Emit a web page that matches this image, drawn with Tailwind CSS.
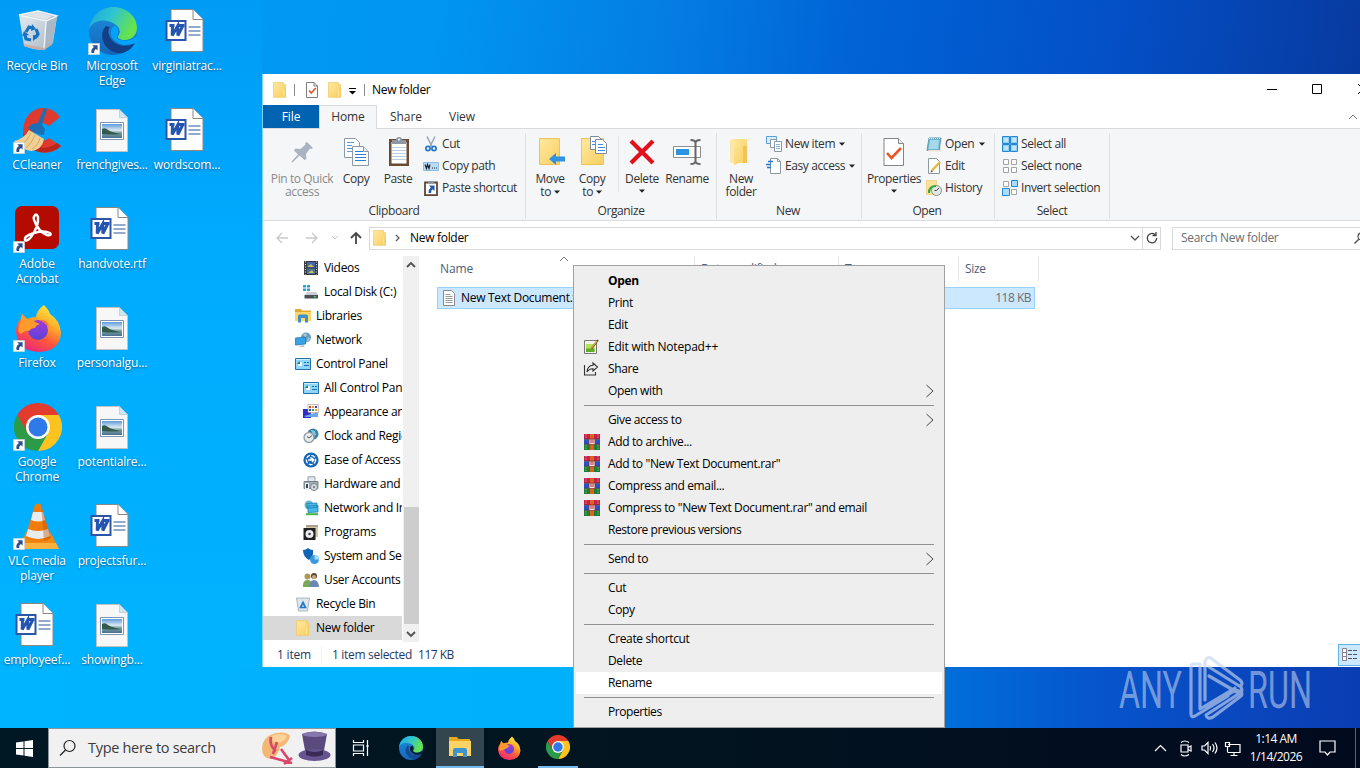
<!DOCTYPE html>
<html lang="en">
  <head>
    <meta charset="UTF-8" />
    <meta name="viewport" content="width=device-width, initial-scale=1.0" />
    <title>New folder</title>

    <script src="https://cdn.jsdelivr.net/npm/@tailwindcss/browser@4"></script>
  </head>
  <body class="w-[1360px] h-[768px] overflow-hidden relative flex flex-col text-xs text-black font-['Open_Sans',sans-serif]">
    <!-- Icon symbols -->
    <svg class="absolute size-0">
      <defs>
        <linearGradient id="g-edge1" x1="0" y1="0" x2="1" y2="0.4"><stop offset="0" stop-color="#1ba5dc" /><stop offset="0.5" stop-color="#2fc5d0" /><stop offset="1" stop-color="#66e34d" /></linearGradient>
        <linearGradient id="g-edge2" x1="0" y1="0" x2="0" y2="1"><stop offset="0" stop-color="#1b8fdf" /><stop offset="1" stop-color="#1566b8" /></linearGradient>
        <linearGradient id="g-ff" x1="0.8" y1="0" x2="0.3" y2="1"><stop offset="0" stop-color="#fff044" /><stop offset="0.35" stop-color="#ffb02a" /><stop offset="0.65" stop-color="#ff5a3a" /><stop offset="1" stop-color="#e8257c" /></linearGradient>
        <linearGradient id="g-ff2" x1="0" y1="0" x2="0" y2="1"><stop offset="0" stop-color="#a33bd6" /><stop offset="1" stop-color="#5a43d8" /></linearGradient>
        <linearGradient id="g-fold" x1="0" y1="0" x2="1" y2="1"><stop offset="0" stop-color="#ffe9a0" /><stop offset="1" stop-color="#f8cf60" /></linearGradient>
        <linearGradient id="g-pic" x1="0" y1="0" x2="0" y2="1"><stop offset="0" stop-color="#5f9bdc" /><stop offset="0.45" stop-color="#dbe9f2" /><stop offset="0.6" stop-color="#86a9ad" /><stop offset="1" stop-color="#476f8f" /></linearGradient>
        <linearGradient id="g-bin" x1="0" y1="0" x2="1" y2="1"><stop offset="0" stop-color="#e4ebf1" /><stop offset="1" stop-color="#a9b8c5" /></linearGradient>
      </defs>
      <symbol id="shortcut" viewBox="0 0 12 12"><path fill="#fff" stroke="#b9c4cf" stroke-width=".6" d="M.3.3h11.4v11.4H.3z" /><path fill="#2b4f8e" d="M4.200 2.200h5.400v5.400L7.900 6Q5.600 7.200 6.200 10H3.600Q2.400 6.400 6 3.900z" /></symbol>
      <symbol id="bin" viewBox="2 0 48 48">
        <path fill="url(#g-bin)" d="M7 8l5 31q10 4 20 4l9-7 4-26-18-4z" /><path fill="#a9b8c4" d="M34 15l11-5-5 27-8 6z" /><path fill="#b5c1cb" d="M7 8l19-4 19 5-11 6z" /><path fill="#dde5ea" d="M12 8l14-3 14 4-6 4z" /><path fill="none" stroke="#f4f7f9" stroke-width="1.300" d="M7 8l27 6 11-5L26 4zM34 15l-2 27" /><path fill="#c9a890" opacity=".7" d="M12 37l20 4 8-5v2l-8 5q-10 0-20-4z" />
        <path fill="none" stroke="#1672c4" stroke-width="3.200" d="M14 25l3-5 4 1M24 22l2 5-3 4M19 33l-5-1-1-4" /><path fill="#1672c4" d="M20 17l4 5-5 2zM27 29l-6 5v-6zM10 29l2-5 5 4z" />
      </symbol>
      <symbol id="edge" viewBox="0 0 48 48">
        <circle cx="24" cy="24" r="24" fill="url(#g-edge2)" /><path fill="url(#g-edge1)" d="M0 22C2 9 12 0 24 0c14 0 24 10 24 21 0 8-6 12-12 12-5 0-8-2-7-4 3-3 2-8-2-11C19 12 6 11 0 22z" /><path fill="#123f86" d="M17 19c-8 8-3 25 12 27 6 1 13-3 17-10-10 6-23 2-26-8-1-3-1-6 1-8z" /><path fill="#00a4fb" d="M27 19q4 5 1 10-1 3 4 4 8 2 14-3l2-1v4l-2 3q-12 5-20-2-5-4-4-10 1-5 5-5zM48 33l-2 5-3 3 6 4V30z" />
      </symbol>
      <symbol id="edge-sm" viewBox="0 0 24 24">
        <circle cx="12" cy="12" r="12" fill="url(#g-edge2)" /><path fill="url(#g-edge1)" d="M0 11C1 4.500 6 0 12 0c7 0 12 5 12 10.500 0 4-3 6-6 6-2.500 0-4-1-3.500-2 1.500-1.500 1-4-1-5.500C9.500 6 3 5.500 0 11z" /><path fill="#154a94" d="M8.500 9.500c-4 4-1.500 12.500 6 13.500 3 .5 6.500-1.500 8.500-5-5 3-11.500 1-13-4-.5-1.500-.5-3 .5-4z" /><path fill="#04222e" d="M13.500 9.500q2 2.500.5 5-.5 1.500 2 2 4 1 7-1.500l1-.5v2l-1 1.500q-6 2.500-10-1-2.500-2-2-5 .5-2.500 2.500-2.500z" />
      </symbol>
      <symbol id="ccleaner" viewBox="0 0 48 48">
        <path fill="#e0392d" d="M46 11l-11 9q-8-6-14 0-4 7 1 13 6 5 13-1l12 8q-9 9-22 6Q9 41 9 24 11 5 27 2q12-1 19 9z" /><path fill="#b8261d" d="M9 27q2 15 16 19 13 2 22-6l-4-3Q24 50 9 27z" /><path fill="#f0cf93" d="M15 24l15 9q-2 11-13 12Q6 43 0 35q10-2 15-11z" /><path stroke="#d2a766" d="M17 27Q13 36 7 39M21 29q-3 8-9 13M26 32q-2 8-8 11" fill="none" /><path fill="#1c6fb4" d="M14 22l4-4 6-1 6-15 3 1-5 16 3 4-1 6q-9 0-16-7z" />
      </symbol>
      <symbol id="acrobat" viewBox="1 1 48 48"><rect x="2" y="2" width="44" height="43" rx="7" fill="#b30b00" /><path fill="none" stroke="#fff" stroke-width="2.500" stroke-linejoin="round" d="M21 13q2-5 4 0 1 9-7 20-4 5-6 3-1-4 9-7 10-3 16 0 2 3-3 2-9-4-12-13-2-4-1-5z" /></symbol>
      <symbol id="firefox" viewBox="0 0 48 48">
        <path fill="url(#g-ff)" d="M30 1q5 5 6 9 10 6 11 19-1 18-22 19Q4 47 2 28q0-9 5-13l1-5 5 5q4-2 9-2 1-7 8-12z" /><circle cx="24" cy="26" r="10" fill="url(#g-ff2)" /><path fill="#ff9a2b" d="M7 15l1-5 5 5q5-1 8 3l5 2q-4 1-5 4-4 0-6 3-4-1-8 3-4-2-2-8 0-3 2-4z" /><path fill="#fe7133" d="M26 16q8-1 9 8l-3-4z" />
      </symbol>
      <symbol id="chrome" viewBox="0 0 48 48"><path fill="#e33b2e" d="M3.200 12A24 24 0 0 1 44.800 12H24L13 30z" /><path fill="#fcc31e" d="M44.800 12A24 24 0 0 1 24 48L34 30 36 22 24 12z" /><path fill="#2b9b48" d="M3.200 12L13.600 30 24 36l10-6L24 48A24 24 0 0 1 3.200 12z" /><circle cx="24" cy="24" r="12" fill="#fff" /><circle cx="24" cy="24" r="9.500" fill="#2f79e8" /></symbol>
      <symbol id="vlc" viewBox="0 0 48 48"><path fill="#f08a12" d="M10 35l2-5h24l3 5 6 12H4l5-12z" /><path fill="#fbb040" d="M7 41L4 47h41l-3-6z" /><path fill="#f27c0b" d="M21 3q3-3 6 0l10 33q-13 8-26 0z" /><path fill="#e9ecef" d="M19 10h10l2 8q-7 3-14 0zM14 27q10 4 20 0l2 7q-12 6-24 0z" /><path fill="#b75308" opacity=".4" d="M27 3l10 33q-3 3-7 3z" /></symbol>
      <symbol id="word" viewBox="2.500 0 48 48"><path fill="#fff" stroke="#8b8583" d="M9.500 2.500h22l10 10v32h-32z" /><path fill="#fff" stroke="#8b8583" d="M31.500 2.500v10h10" /><path fill="none" stroke="#2a5699" stroke-width="1.200" d="M27 20h12M27 24h12M27 28h12" /><path fill="#fff" stroke="#2a55a8" stroke-width="2" d="M5 14h19v19H5z" /><path fill="none" stroke="#2355b0" stroke-width="3" d="M8 18.500h5M16 18.500h7M11 18.500l-.3 10L16.200 19l.2 9.500 5-10" /></symbol>
      <symbol id="image" viewBox="1 0 48 48"><path fill="#f7f7f7" stroke="#c4c1be" d="M8.500 3.500h23l8 8v34h-31z" /><path fill="#cfe6f5" stroke="#b9c6cf" stroke-width=".7" d="M31.500 3.500v8h8z" /><path fill="#fff" stroke="#7a96b4" d="M12.500 16.500h23v17h-23z" /><path fill="url(#g-pic)" d="M14 18h20v14H14z" /><path fill="#33594a" d="M14 23q3-2 6 1 5 3 14 4-10 1-20 0z" /></symbol>

      <symbol id="folder" viewBox="0 0 16 16"><path fill="url(#g-fold)" stroke="#efc665" stroke-width=".7" d="M1.500.6h10v2h2v12.700H1.500z" /><path fill="#f6cd61" d="M11 6h3v9.500h-3z" /><path fill="#ffebab" d="M11.300 6.500h1v8h-1z" /></symbol>
      <symbol id="check-doc" viewBox="0 0 14 16"><path fill="#fff" stroke="#7d7d7d" d="M1.500.5H9L12.500 4v11.500h-11z" /><path fill="none" stroke="#7d7d7d" d="M9 .5V4h3.500" /><path fill="none" stroke="#e8562a" stroke-width="1.700" d="M4 8.500l2.300 2.500 4.500-5" /></symbol>
      <symbol id="props" viewBox="0 0 22 30"><path fill="#fff" stroke="#858585" d="M1 1.500h14.500l5 5v22H1z" /><path fill="#eee" stroke="#858585" d="M15.500 1.500v5h5" /><path fill="none" stroke="#e8562a" stroke-width="2.600" d="M4 16l4.500 5L18 11" /></symbol>
      <symbol id="pin" viewBox="0 0 32 32"><path fill="#a9b3c1" d="M21 6l6 6-2 1-1-.5-4 5.500.5 5-2 1-5-4.500L7 26l-1.500.5L6 25l6-6.500-4-4 1.500-2 5 .5 5-4.500-.5-1.500z" /></symbol>
      <symbol id="copy" viewBox="-1 0 32 32"><g fill="#fff" stroke="#8d98a8"><path d="M3.500 2.500h11l4 4v15h-15z" /><path d="M11.500 10.500h11l5 5v14h-16z" /></g><path stroke="#5aa0e0" d="M6 6.500h7M6 9.500h5M6 12.500h5M6 15.500h5" /><path stroke="#2c7fd0" d="M14 15.500h8M14 18.500h11M14 21.500h11M14 24.500h11" /><path fill="#e4e9ee" stroke="#8d98a8" d="M22.500 10.500v5h5" /></symbol>
      <symbol id="paste" viewBox="-1 -1 32 32"><path fill="#6b4a34" d="M6 2h20v27H6z" /><path fill="#fff" d="M8.500 5h15v21.500h-15z" /><path stroke="#b9cfe4" d="M9 10.500h14M9 13.500h14M9 16.500h14M9 19.500h14M9 22.500h14" /><path fill="#8c98a6" d="M9 3h4q0-3 3-3t3 3h4v4H9z" /><circle cx="16" cy="2.500" r="1" fill="#fff" /></symbol>
      <symbol id="cut" viewBox="0 0 16 16"><path fill="none" stroke="#9aa5b0" stroke-width="1.500" d="M4 .5l5 10M12 .5l-5 10" /><g fill="none" stroke="#2478c8" stroke-width="1.700"><circle cx="5" cy="12.500" r="2.100" /><circle cx="11" cy="12.500" r="2.100" /></g></symbol>
      <symbol id="copypath" viewBox="0 0 16 16"><path fill="#b9dcf8" stroke="#8dbce6" d="M.5 4.500h15v8H.5z" /><path fill="none" stroke="#223" stroke-width="1.200" d="M2 6.500l1.500 4 1-4 1.500 4 1-4M9 10h1M11 10h1M13 10h1" /></symbol>
      <symbol id="pasteshort" viewBox="0 0 16 16"><path fill="#fff" stroke="#5f4634" stroke-width="1.800" d="M2 2.500h12v12.600H2z" /><path fill="#8794a3" d="M5 1h6v2.500H5z" /><path fill="#1e5aa8" d="M6 5.500h5.500V11L9.700 9.300Q8 10 8 13H5.500q-.4-3.400 2.300-5.600z" /></symbol>
      <symbol id="moveto" viewBox="0 0 32 32"><path fill="url(#g-fold)" stroke="#ecc35d" d="M5.500 2.500h20v26h-20z" /><path fill="#2f92e2" d="M15 23l7-6v3.500h9v5h-9V29z" /></symbol>
      <symbol id="copyto" viewBox="0 0 32 32"><path fill="url(#g-fold)" stroke="#ecc35d" d="M5.500 2.500h22v26h-22z" /><g fill="#fff" stroke="#7f8b9a"><path d="M14.500.5h8l3 3v10h-11z" /><path d="M19.500 3.500h7l4 4v10h-11z" /></g><path stroke="#3f8fdc" d="M16 5.500h3M16 8.500h3M22 8.500h5M22 11.500h7M22 14.500h7" /></symbol>
      <symbol id="delete" viewBox="0 0 32 32"><path stroke="#e0101c" stroke-width="4.200" d="M5 5l22 22M27 5L5 27" /></symbol>
      <symbol id="rename" viewBox="0 0 32 32"><path fill="#fff" stroke="#8d8d8d" d="M2.500 10.500h27v11h-27z" /><path fill="#2f92e2" d="M5 13h13v6H5z" /><path fill="none" stroke="#666" stroke-width="2" d="M19.500 4q5 0 5 3 0-3 5-3M24.500 6v20M19.500 28q5 0 5-3 0 3 5 3" /></symbol>
      <symbol id="newfolder" viewBox="1 0 32 32"><path fill="#fbe7ad" d="M6 4l4 1v23l-4-2z" /><path fill="url(#g-fold)" d="M7 3h16v24h-8l-5 2V8z" /><path fill="#f2c452" d="M19 10h4v17h-4z" /><path fill="#fdf2d3" d="M23 20l2 7h-2z" /></symbol>
      <symbol id="newitem" viewBox="0 0 16 16"><path fill="#d8ecfb" stroke="#5da0dc" d="M.5.5h10v7H.5z" /><g fill="#fff" stroke="#8b97a5"><path d="M4.500 3.500h6v8h-6z" /><path d="M8.500 5.500h7v10h-7z" /></g><path stroke="#8bb4dc" d="M10 8.500h4M10 10.500h4M10 12.500h4" /></symbol>
      <symbol id="easy" viewBox="0 0 16 16"><path fill="#fff" stroke="#8b97a5" d="M4.500.5h7l3 3v12h-10z" /><path fill="none" stroke="#8b97a5" d="M11.500.5v3h3" /><path stroke="#2478c8" stroke-width="1.400" d="M2 3.500h5M0 6.500h5M1 9.500h4" /></symbol>
      <symbol id="notepad" viewBox="0 0 16 16"><path fill="#6fb5cf" stroke="#5d9ab4" d="M3 2h12l-1.500 12.500H1z" /><path fill="#a5d8ea" d="M4 4h9l-1 9H2.500z" /><path stroke="#f3fbff" stroke-dasharray="1 1" d="M3 2.500h12" /><path fill="#e9e3d6" d="M2 14h12l1-9v10.500H3z" /></symbol>
      <symbol id="edit" viewBox="0 0 16 16"><path fill="#fff" stroke="#8b97a5" d="M2.500.5h8l3 3v12h-11z" /><path stroke="#e7b73b" stroke-width="2.400" d="M6 12.500l8-8.500" /><path fill="#555" d="M4.500 14.500l.7-2.500 1.800 1.700z" /></symbol>
      <symbol id="history" viewBox="0 0 16 16"><path fill="#fce39b" stroke="#edc766" stroke-width=".6" d="M.5.5h10v14H.5z" /><circle cx="10.500" cy="10.500" r="5" fill="#e2e6e4" stroke="#89938f" /><path fill="none" stroke="#3aa63c" stroke-width="2.200" d="M3 13q0-7 7-7" /><path stroke="#444" fill="none" d="M10.500 10.500l2.500-2.500M10.500 10.500h-2" /></symbol>
      <symbol id="selall" viewBox="0 0 16 16"><path fill="#8fd0fb" stroke="#2586d2" d="M.5.5h7v7h-7zM8.500.5h7v7h-7zM.5 8.500h7v7h-7zM8.500 8.500h7v7h-7z" /><path fill="#bfe6ff" d="M2 2h4v4H2zM10 2h4v4h-4zM2 10h4v4H2zM10 10h4v4h-4z" /></symbol>
      <symbol id="selnone" viewBox="0 0 16 16"><path fill="#fff" stroke="#a3a3a3" d="M1.500 1.500h5v5h-5zM9.500 1.500h5v5h-5zM1.500 9.500h5v5h-5zM9.500 9.500h5v5h-5z" /></symbol>
      <symbol id="selinv" viewBox="0 0 16 16"><path fill="#fff" stroke="#a3a3a3" d="M1.500 1.500h5v5h-5zM9.500 9.500h5v5h-5z" /><path fill="#aadcff" stroke="#2586d2" d="M9.500.5h6v6h-6zM.5 8.500h7v7h-7z" /></symbol>

      <symbol id="videos" viewBox="0 0 16 16"><path fill="#35383f" d="M1 1h14v14H1z" /><path fill="#4665b5" d="M4 2h8v5.500H4z" /><path fill="#48709a" d="M4 8.500h8V14H4z" /><path fill="#c4bf4e" d="M5 6l3-2 3 3H5zM5 13l4-3 2 3z" /><path stroke="#d5d9de" stroke-width="1.200" stroke-dasharray="1 1.500" d="M2.500 1.500v13M13.500 1.500v13" /></symbol>
      <symbol id="disk" viewBox="0 0 16 16"><path fill="#26a4dd" d="M0 1h3v2.500H0zM4 1h3v2.500H4zM0 4.500h3V7H0zM4 4.500h3V7H4z" /><path fill="#c9ced2" d="M4 8h9l2 3H2z" /><path fill="#4a5257" d="M1.500 11h13.500v3.500H1.500z" /><path stroke="#6fe36f" d="M11 12.800h2" /></symbol>
      <symbol id="library" viewBox="0 0 16 16"><path fill="#e5a92c" d="M0 1h6l1 1.500h9V6H0z" /><path fill="#fcd667" d="M0 4h16v9H0z" /><path fill="#3d92cc" d="M3 8q0-1.500 1.500-1.500h7Q13 6.500 13 8v6.500h-3V10H6v4.500H3z" /></symbol>
      <symbol id="network" viewBox="0 0 16 16"><circle cx="11" cy="5.500" r="5" fill="#6d9cba" /><path fill="#a7cbdd" d="M8 2q3-1 4 1l-2 3zM13 5l2 2-3 3z" /><path fill="#35a3e6" stroke="#2278b6" stroke-width=".8" d="M.5 6l10-1v7L.5 13z" /><path fill="#6d8593" d="M3 14.500l5-1 2 1z" /></symbol>
      <symbol id="cpanel" viewBox="0 0 16 16"><path fill="#8ed6fb" stroke="#2271a8" d="M.5 2.500h15v11H.5z" /><path stroke="#c9efff" d="M1 3.500h14" /><circle cx="5" cy="8" r="2.200" fill="#fff" /><path fill="#288a4f" d="M5 8V5.500A2.500 2.500 0 0 0 2.500 8z" /><path stroke="#2170ad" stroke-width="1.200" d="M9 6.500h2M12 6.500h2M9 9.500h5" /></symbol>
      <symbol id="appear" viewBox="0 0 16 16"><path fill="#2c2fc7" d="M0 5h8v9H0z" /><path fill="#6aa7ef" d="M1 12l14-4v5H3z" /><path fill="#fff" stroke="#a58a8a" stroke-width=".6" d="M5 .5h10.500v8H5z" /><path fill="#d34c2c" d="M6 2h2v2H6z" /><path fill="#e3a023" d="M9 2h2v2H9zM12 5h2v2h-2z" /><path fill="#3b3bbd" d="M12 2h2v2h-2zM6 5h2v2H6z" /><path fill="#3d9c45" d="M9 5h2v2H9z" /></symbol>
      <symbol id="clock" viewBox="0 0 16 16"><circle cx="10" cy="6" r="5.500" fill="#3a84b0" /><path fill="#8ac3d4" d="M8 2l4 1 1 4-3 1z" /><circle cx="6" cy="9.500" r="5" fill="#e6eaec" stroke="#8b969c" stroke-width="1.200" /><path fill="none" stroke="#555" d="M6 10l3-2.500M6 10L4 8.500" /></symbol>
      <symbol id="ease" viewBox="0 0 16 16"><circle cx="8" cy="8" r="7.600" fill="#1566b6" /><circle cx="8" cy="8" r="4.700" fill="none" stroke="#fff" stroke-width="1.300" stroke-dasharray="4 1.500" /><path fill="none" stroke="#fff" stroke-width="1.300" d="M5 8h6M8 5v3M9 6l2 2-2 2" /></symbol>
      <symbol id="printer" viewBox="0 0 16 16"><path fill="#e5e9ec" stroke="#7e8b94" stroke-width=".8" d="M5 .8h7V6H5z" /><path fill="#9ea9b1" stroke="#66727a" stroke-width=".8" d="M1 5.500h14v7H1z" /><path fill="#e9edf0" d="M2 7h4v7H2z" /><path fill="#3e474d" d="M3 8h2v4H3z" /><circle cx="11" cy="11" r="3.500" fill="#d4dbe0" stroke="#7c878e" /><circle cx="11" cy="11" r="1" fill="#667" /></symbol>
      <symbol id="netint" viewBox="0 0 16 16"><circle cx="6" cy="5" r="4.500" fill="#66b5d3" /><path fill="#47b8e8" stroke="#1b7fae" stroke-width=".8" d="M4 3.500l10-.5v4.500l-10 .5zM5 6l10-.5V12L5 12.500z" /><path stroke="#44b548" stroke-width="2" d="M3 14.200h12" /></symbol>
      <symbol id="programs" viewBox="0 0 16 16"><path fill="#d7c9a4" d="M3 1h12v12H3z" /><path fill="#a9a391" d="M3 1h12v2H3z" /><path fill="#1f2124" d="M.5 4h12v12H.5z" /><circle cx="6.500" cy="10" r="4" fill="#eceef0" /><circle cx="6.500" cy="10" r="1.300" fill="#444" /></symbol>
      <symbol id="shield" viewBox="0 0 16 16"><path fill="#1063b5" d="M0 2q3 0 5-2 2 2 5 2 1 7-4 10Q0 9 0 2z" /><circle cx="11.500" cy="11.500" r="4.500" fill="#3a9ade" /><path fill="#a8dbfa" d="M11.500 11.500V7a4.500 4.500 0 0 1 4.500 4.500z" /></symbol>
      <symbol id="users" viewBox="0 0 16 16"><circle cx="4.500" cy="4.500" r="3" fill="#ad9a55" /><path fill="#7ba653" d="M0 15q-.5-7 4.500-7T9 15z" /><circle cx="11" cy="4" r="3" fill="#5b4634" /><circle cx="11" cy="5" r="2" fill="#d9a884" /><path fill="#6b87b5" d="M6.500 15q0-7 4.500-7t5 7z" /></symbol>
      <symbol id="bin-sm" viewBox="0 0 16 16"><path fill="#dfe5ea" stroke="#9aa7b2" stroke-width=".8" d="M1.500 2h13l-2 13h-9z" /><path fill="none" stroke="#2579c8" stroke-width="1.700" d="M5.500 11.500l2.500-5 2.500 5z" /></symbol>
      <symbol id="textfile" viewBox="0 0 14 16"><path fill="#fff" stroke="#8a8a8a" d="M1.500.5h8l3 3v12h-11z" /><path stroke="#999" d="M3.500 4.500h5M3.500 6.500h7M3.500 8.500h7M3.500 10.500h7M3.500 12.500h7" /></symbol>

      <symbol id="npp" viewBox="0 0 16 16"><path fill="#f3f3ee" stroke="#777" d="M1.500 1.500h12v13h-12z" /><path fill="#b6e05c" d="M3 5h8.500v8H3z" /><path fill="#62ad25" d="M3 9.500h8.500V13H3z" /><path stroke="#5a4a2a" stroke-width="2" d="M8.500 9.500L15 1" /><path stroke="#eab83c" stroke-width="1.200" d="M8.500 9L14 2" /></symbol>
      <symbol id="share" viewBox="0 0 16 16"><path fill="none" stroke="#333" stroke-width="1.100" d="M1.500 4v10h11v-3M10 2l4.500 4L10 10V7.700Q6 7.500 4 11q.5-6.500 6-6.700z" /></symbol>
      <symbol id="rar" viewBox="0 0 16 16"><path fill="#c8204e" d="M0 0h16v5H0z" /><path fill="#2c51c4" d="M0 5.500h16V10H0z" /><path fill="#17803a" d="M0 10.500h16V16H0z" /><path stroke="#191c2a" stroke-width=".7" d="M0 5.200h16M0 10.300h16" /><path fill="#d9641e" d="M6 0h4v16H6z" /><path stroke="#e0a050" stroke-width=".8" stroke-dasharray="1.500 1" d="M2 0v5M14 0v5M2 11v5M14 11v5" /><path fill="#f3ded9" stroke="#8a2c2c" stroke-width=".7" d="M5 5h6v5.500H5z" /><path stroke="#a33" d="M7 5v4M9 5v4" /></symbol>
      <symbol id="explorer" viewBox="0 0 24 24"><path fill="#e8a822" d="M1 2h8l1.500 2H22v5H1z" /><path fill="#fdd366" d="M1 6h22v15H1z" /><path fill="#3d94cf" d="M5 15q0-2 2-2h10q2 0 2 2v7h-4v-4H9v4H5z" /></symbol>
      <symbol id="chev" viewBox="0 0 10 14"><path fill="none" stroke="#444" d="M1.500 1l6.500 6-6.500 6" /></symbol>
      <symbol id="caret" viewBox="0 0 6 4"><path d="M0 .5h6L3 3.700z" fill="#222" /></symbol>
    </svg>

    <!-- Desktop -->
    <main class="h-[728px] relative bg-[#0653cb]">
      <div class="absolute inset-x-0 top-0 h-[74px] bg-[linear-gradient(98deg,#009cf5_0%,#0096f1_32%,#047de3_49%,#0063d6_63%,#044fc6_82%,#073a9f_100%)]"></div>
      <div class="absolute left-0 top-0 w-[262px] h-full bg-linear-to-b from-[#009bf5] via-[#00abfe] via-35% to-[#00b4ff]"></div>
      <div class="absolute inset-x-0 top-[667px] h-[61px] bg-[linear-gradient(to_right,#00b4ff_0%,#00b0fb_42%,#0070db_69%,#0656ce_80%,#0a46bd_92%,#0a3db3_100%)]"></div>

      <div class="relative grid grid-flow-col grid-rows-[repeat(7,99px)] auto-cols-[75px] w-[225px] pt-[7px] text-white text-center leading-[15px] tracking-[-0.15px] text-shadow-[0_1px_2px_rgb(0_0_0/0.5)]">
        <div class="flex flex-col items-center"><svg class="size-12 shrink-0"><use href="#bin" /></svg><span class="pt-[3px] pr-px">Recycle Bin</span></div>
        <div class="flex flex-col items-center relative"><svg class="size-12 shrink-0"><use href="#ccleaner" /></svg><svg class="size-3 absolute left-[13px] top-9"><use href="#shortcut" /></svg><span class="pt-[3px] pr-px">CCleaner</span></div>
        <div class="flex flex-col items-center relative"><svg class="size-12 shrink-0"><use href="#acrobat" /></svg><svg class="size-3 absolute left-[13px] top-9"><use href="#shortcut" /></svg><span class="pt-[3px] pr-px">Adobe<br />Acrobat</span></div>
        <div class="flex flex-col items-center relative"><svg class="size-12 shrink-0"><use href="#firefox" /></svg><svg class="size-3 absolute left-[13px] top-9"><use href="#shortcut" /></svg><span class="pt-[3px] pr-px">Firefox</span></div>
        <div class="flex flex-col items-center relative"><svg class="size-12 shrink-0"><use href="#chrome" /></svg><svg class="size-3 absolute left-[13px] top-9"><use href="#shortcut" /></svg><span class="pt-[3px] pr-px">Google<br />Chrome</span></div>
        <div class="flex flex-col items-center relative"><svg class="size-12 shrink-0"><use href="#vlc" /></svg><svg class="size-3 absolute left-[13px] top-9"><use href="#shortcut" /></svg><span class="pt-[3px] pr-px">VLC media<br />player</span></div>
        <div class="flex flex-col items-center"><svg class="size-12 shrink-0"><use href="#word" /></svg><span class="pt-[3px] pr-px">employeef...</span></div>
        <div class="flex flex-col items-center relative"><svg class="size-12 shrink-0"><use href="#edge" /></svg><svg class="size-3 absolute left-[13px] top-9"><use href="#shortcut" /></svg><span class="pt-[3px] pr-px">Microsoft<br />Edge</span></div>
        <div class="flex flex-col items-center"><svg class="size-12 shrink-0"><use href="#image" /></svg><span class="pt-[3px] pr-px">frenchgives...</span></div>
        <div class="flex flex-col items-center"><svg class="size-12 shrink-0"><use href="#word" /></svg><span class="pt-[3px] pr-px">handvote.rtf</span></div>
        <div class="flex flex-col items-center"><svg class="size-12 shrink-0"><use href="#image" /></svg><span class="pt-[3px] pr-px">personalgu...</span></div>
        <div class="flex flex-col items-center"><svg class="size-12 shrink-0"><use href="#image" /></svg><span class="pt-[3px] pr-px">potentialre...</span></div>
        <div class="flex flex-col items-center"><svg class="size-12 shrink-0"><use href="#word" /></svg><span class="pt-[3px] pr-px">projectsfur...</span></div>
        <div class="flex flex-col items-center"><svg class="size-12 shrink-0"><use href="#image" /></svg><span class="pt-[3px] pr-px">showingb...</span></div>
        <div class="flex flex-col items-center"><svg class="size-12 shrink-0"><use href="#word" /></svg><span class="pt-[3px] pr-px">virginiatrac...</span></div>
        <div class="flex flex-col items-center"><svg class="size-12 shrink-0"><use href="#word" /></svg><span class="pt-[3px] pr-px">wordscom...</span></div>
      </div>

      <!-- Explorer window -->
      <section class="absolute left-[262px] top-[74px] w-[1110px] h-[593px] bg-white border-l border-[#7fd4ff] flex flex-col overflow-hidden tracking-[-0.3px]">
        <div class="h-[31px] shrink-0 flex items-center relative">
          <svg class="size-4 ml-[9px]"><use href="#folder" /></svg>
          <i class="w-px h-3 bg-[#8a8a8a] ml-1.5"></i>
          <svg class="w-[14px] h-4 ml-2.5"><use href="#check-doc" /></svg>
          <svg class="size-4 ml-2"><use href="#folder" /></svg>
          <svg class="w-[7px] h-[7px] ml-1.5 mt-1" viewBox="0 0 7 7"><path d="M0 .5h7" stroke="#000" /><path d="M0 3h7L3.500 6.500z" /></svg>
          <i class="w-px h-3 bg-[#8a8a8a] ml-2"></i>
          <span class="ml-[7px]">New folder</span>
          <svg class="w-[110px] h-3 absolute left-[1003px] top-[9px]" viewBox="0 0 110 12"><path fill="none" stroke="#000" d="M1 6.500h10M46.500 1.500h9v9h-9zM92 1l10 10M102 1L92 11" /></svg>
        </div>
        <div class="h-6 shrink-0 flex text-[#333] leading-6 text-center relative border-b border-[#dadbdc] tracking-[-0.1px]">
          <span class="w-14 bg-[#0063b1] text-white">File</span>
          <span class="w-[58px] h-6 bg-[#f5f6f7] border-x border-t border-[#dadbdc] leading-[22px]">Home</span>
          <span class="w-[58px]">Share</span>
          <span class="w-[54px]">View</span>
          <svg class="w-2.5 h-2 absolute left-[1085px] top-2" viewBox="0 0 10 8"><path fill="none" stroke="#777" d="M1 6l4-4 4 4" /></svg>
        </div>

        <!-- Ribbon -->
        <div class="h-[92px] shrink-0 bg-[#f5f6f7] border-b border-[#dadbdc] flex text-[#333] pt-1 pb-px tracking-[-0.4px]">
          <div class="w-[263px] border-r border-[#dfe0e1] flex flex-col">
            <div class="flex h-[70px] pt-[3px] pl-0.5 text-center leading-[13px]">
              <div class="w-[74px] flex flex-col items-center text-[#8a8a8a]"><svg class="size-8"><use href="#pin" /></svg><span class="pt-1 whitespace-nowrap">Pin to Quick<br />access</span></div>
              <div class="w-[34px] flex flex-col items-center"><svg class="size-8"><use href="#copy" /></svg><span class="pt-1">Copy</span></div>
              <div class="w-[50px] flex flex-col items-center"><svg class="size-8"><use href="#paste" /></svg><span class="pt-1">Paste</span></div>
              <div class="flex flex-col text-left leading-[22px] whitespace-nowrap -mt-[3px]">
                <div class="flex items-center gap-[3px] h-[22px]"><svg class="size-4"><use href="#cut" /></svg>Cut</div>
                <div class="flex items-center gap-[3px] h-[22px]"><svg class="size-4"><use href="#copypath" /></svg>Copy path</div>
                <div class="flex items-center gap-[3px] h-[22px]"><svg class="size-4"><use href="#pasteshort" /></svg>Paste shortcut</div>
              </div>
            </div>
            <span class="text-center leading-4 pt-[1px]">Clipboard</span>
          </div>
          <div class="w-[191px] border-r border-[#dfe0e1] flex flex-col">
            <div class="flex h-[70px] pt-[3px] text-center leading-[13px]">
              <div class="w-12 flex flex-col items-center"><svg class="size-8"><use href="#moveto" /></svg><span class="pt-1">Move<br />to <svg class="w-1.5 h-1 inline align-[2px]"><use href="#caret" /></svg></span></div>
              <div class="w-9 flex flex-col items-center"><svg class="size-8"><use href="#copyto" /></svg><span class="pt-1">Copy<br />to <svg class="w-1.5 h-1 inline align-[2px]"><use href="#caret" /></svg></span></div>
              <i class="w-px h-14 bg-[#e2e3e4] ml-2 mr-px"></i>
              <div class="w-11 flex flex-col items-center"><svg class="size-8"><use href="#delete" /></svg><span class="pt-1">Delete</span><svg class="w-1.5 h-1 mt-1"><use href="#caret" /></svg></div>
              <div class="w-[46px] flex flex-col items-center"><svg class="size-8"><use href="#rename" /></svg><span class="pt-1">Rename</span></div>
            </div>
            <span class="text-center leading-4 pt-[1px]">Organize</span>
          </div>
          <div class="w-[145px] border-r border-[#dfe0e1] flex flex-col">
            <div class="flex h-[70px] pt-[3px] text-center leading-[13px]">
              <div class="w-12 flex flex-col items-center"><svg class="size-8"><use href="#newfolder" /></svg><span class="pt-1">New<br />folder</span></div>
              <div class="flex flex-col text-left leading-[22px] whitespace-nowrap pl-px -mt-[3px]">
                <div class="flex items-center gap-[3px] h-[22px]"><svg class="size-4"><use href="#newitem" /></svg>New item<svg class="w-1.5 h-1 ml-px"><use href="#caret" /></svg></div>
                <div class="flex items-center gap-[3px] h-[22px]"><svg class="size-4"><use href="#easy" /></svg>Easy access<svg class="w-1.5 h-1 ml-px"><use href="#caret" /></svg></div>
              </div>
            </div>
            <span class="text-center leading-4 pt-[1px] pr-0.5">New</span>
          </div>
          <div class="w-[133px] border-r border-[#dfe0e1] flex flex-col">
            <div class="flex h-[70px] pt-[3px] text-center leading-[13px]">
              <div class="w-16 flex flex-col items-center"><svg class="w-[22px] h-8"><use href="#props" /></svg><span class="pt-1">Properties</span><svg class="w-1.5 h-1 mt-1"><use href="#caret" /></svg></div>
              <div class="flex flex-col text-left leading-[22px] whitespace-nowrap -mt-[3px]">
                <div class="flex items-center gap-[3px] h-[22px]"><svg class="size-4"><use href="#notepad" /></svg>Open<svg class="w-1.5 h-1 ml-0.5"><use href="#caret" /></svg></div>
                <div class="flex items-center gap-[3px] h-[22px]"><svg class="size-4"><use href="#edit" /></svg>Edit</div>
                <div class="flex items-center gap-[3px] h-[22px]"><svg class="size-4"><use href="#history" /></svg>History</div>
              </div>
            </div>
            <span class="text-center leading-4 pt-[1px] pr-0.5">Open</span>
          </div>
          <div class="w-[115px] border-r border-[#dfe0e1] flex flex-col">
            <div class="h-[70px] pl-[7px] leading-[22px] whitespace-nowrap">
              <div class="flex items-center gap-[3px] h-[22px]"><svg class="size-4"><use href="#selall" /></svg>Select all</div>
              <div class="flex items-center gap-[3px] h-[22px]"><svg class="size-4"><use href="#selnone" /></svg>Select none</div>
              <div class="flex items-center gap-[3px] h-[22px]"><svg class="size-4"><use href="#selinv" /></svg>Invert selection</div>
            </div>
            <span class="text-center leading-4 pt-[1px]">Select</span>
          </div>
        </div>

        <!-- Address bar -->
        <div class="h-[34px] shrink-0 flex items-center mb-px">
          <svg class="w-[90px] h-4 ml-3 shrink-0" viewBox="0 0 90 16"><g fill="none"><path stroke="#c9c9c9" stroke-width="1.300" d="M13 8H2M7 3L2 8l5 5M31 8h11M37 3l5 5-5 5" /><path stroke="#c9c9c9" d="M57 6l3 3 3-3" /><path stroke="#444" stroke-width="1.800" d="M81 14V3M76 8l5-5 5 5" /></g></svg>
          <div class="ml-1 w-[774px] shrink-0 h-[23px] border border-[#d9d9d9] flex items-center">
            <svg class="size-4 ml-[2px]"><use href="#folder" /></svg>
            <svg class="w-1.5 h-2 ml-[7px]" viewBox="0 0 6 8"><path fill="none" stroke="#555" stroke-width="1.200" d="M1 1l3 3-3 3" /></svg>
            <span class="ml-[9px]">New folder</span>
            <svg class="w-2.5 h-2 ml-auto mr-[2px]" viewBox="0 0 10 8"><path fill="none" stroke="#555" stroke-width="1.300" d="M1 2l4 4 4-4" /></svg>
          </div>
          <div class="w-[18px] shrink-0 h-[23px] border border-l-0 border-[#d9d9d9] flex items-center justify-center"><svg class="size-3.5" viewBox="0 0 14 14"><path fill="none" stroke="#444" stroke-width="1.300" d="M10 3.500A4.700 4.700 0 1 0 11.700 7M11 1v3.500H7.500" /></svg></div>
          <div class="ml-[11px] w-[205px] shrink-0 h-[23px] border border-[#d9d9d9] pl-2 flex items-center text-[#6d6d6d] relative">Search New folder<svg class="size-3 absolute left-[181px] top-1" viewBox="0 0 12 12"><circle cx="7.500" cy="4.500" r="3.500" fill="none" stroke="#555" stroke-width="1.200" /><path stroke="#555" stroke-width="1.500" d="M5 7l-4.500 4.500" /></svg></div>
        </div>

        <div class="h-[386px] shrink-0 flex">
          <!-- Navigation tree -->
          <div class="w-[139px] shrink-0 overflow-hidden whitespace-nowrap leading-6">
            <div class="flex items-center h-6 pl-10 gap-[5px]"><svg class="size-4 shrink-0"><use href="#videos" /></svg>Videos</div>
            <div class="flex items-center h-6 pl-10 gap-[5px]"><svg class="size-4 shrink-0"><use href="#disk" /></svg>Local Disk (C:)</div>
            <div class="flex items-center h-6 pl-8 gap-[5px]"><svg class="size-4 shrink-0"><use href="#library" /></svg>Libraries</div>
            <div class="flex items-center h-6 pl-8 gap-[5px]"><svg class="size-4 shrink-0"><use href="#network" /></svg>Network</div>
            <div class="flex items-center h-6 pl-8 gap-[5px]"><svg class="size-4 shrink-0"><use href="#cpanel" /></svg>Control Panel</div>
            <div class="flex items-center h-6 pl-10 gap-[5px]"><svg class="size-4 shrink-0"><use href="#cpanel" /></svg>All Control Panel Items</div>
            <div class="flex items-center h-6 pl-10 gap-[5px]"><svg class="size-4 shrink-0"><use href="#appear" /></svg>Appearance and Personalization</div>
            <div class="flex items-center h-6 pl-10 gap-[5px]"><svg class="size-4 shrink-0"><use href="#clock" /></svg>Clock and Region</div>
            <div class="flex items-center h-6 pl-10 gap-[5px]"><svg class="size-4 shrink-0"><use href="#ease" /></svg>Ease of Access</div>
            <div class="flex items-center h-6 pl-10 gap-[5px]"><svg class="size-4 shrink-0"><use href="#printer" /></svg>Hardware and Sound</div>
            <div class="flex items-center h-6 pl-10 gap-[5px]"><svg class="size-4 shrink-0"><use href="#netint" /></svg>Network and Internet</div>
            <div class="flex items-center h-6 pl-10 gap-[5px]"><svg class="size-4 shrink-0"><use href="#programs" /></svg>Programs</div>
            <div class="flex items-center h-6 pl-10 gap-[5px]"><svg class="size-4 shrink-0"><use href="#shield" /></svg>System and Security</div>
            <div class="flex items-center h-6 pl-10 gap-[5px]"><svg class="size-4 shrink-0"><use href="#users" /></svg>User Accounts</div>
            <div class="flex items-center h-6 pl-8 gap-[5px]"><svg class="size-4 shrink-0"><use href="#bin-sm" /></svg>Recycle Bin</div>
            <div class="flex items-center h-6 pl-8 gap-[5px] bg-[#d9d9d9]"><svg class="size-4 shrink-0"><use href="#folder" /></svg>New folder</div>
          </div>
          <div class="w-4 ml-px bg-[#f0f0f0] flex flex-col items-center">
            <svg class="size-4 mt-0.5" viewBox="0 0 16 16"><path fill="none" stroke="#505050" stroke-width="1.800" d="M4 9l4-4 4 4" /></svg>
            <div class="w-[15px] h-[117px] mt-[233px] bg-[#cdcdcd]"></div>
            <svg class="size-4 mt-0.5" viewBox="0 0 16 16"><path fill="none" stroke="#505050" stroke-width="1.800" d="M4 6l4 4 4-4" /></svg>
          </div>

          <!-- File list -->
          <div class="w-[620px] pl-[18px]">
            <div class="h-[25px] flex leading-[25px] text-[#4c607a] relative">
              <span class="w-[258px] pl-[3px] border-r border-[#e5e5e5] tracking-[-0.1px]">Name</span>
              <span class="w-36 pl-1.5 border-r border-[#e5e5e5]">Date modified</span>
              <span class="w-[120px] pl-1.5 border-r border-[#e5e5e5]">Type</span>
              <span class="w-20 pl-1.5 border-r border-[#e5e5e5]">Size</span>
              <svg class="w-2.5 h-1.5 absolute left-[122px] top-0" viewBox="0 0 10 6"><path fill="none" stroke="#777" d="M1 5l4-4 4 4" /></svg>
            </div>
            <div class="mt-1.5 w-[598px] h-[22px] bg-[#cce8ff] border border-[#99d1ff] flex items-center">
              <svg class="w-3.5 h-4 ml-1"><use href="#textfile" /></svg><span class="ml-[5px]">New Text Document.txt</span><span class="ml-auto mr-[3px] text-[#6d6d6d] tracking-[-0.5px]">118 KB</span>
            </div>
          </div>
        </div>

        <!-- Status bar -->
        <div class="h-[25px] flex items-center text-[#1f3a66] relative">
          <span class="ml-3.5 tracking-[-0.2px]">1 item</span><i class="w-px h-4 bg-[#f0f0f0] ml-2.5 mr-[10px]"></i><span>1 item selected</span><span class="ml-1.5 tracking-[-0.5px]">117 KB</span>
          <div class="absolute left-[1075px] top-0.5 w-[26px] h-[22px] bg-[#cce8ff] border border-[#5fb3e8]"><svg class="w-4 h-3.5 ml-[3px] mt-[3px]" viewBox="0 0 16 14"><path fill="#fff" stroke="#8a7f8f" d="M.5.5h4v12h-4zM.5 4.500h4M.5 8.500h4" /><path stroke="#555" stroke-dasharray="4 1" d="M6 2.500h10M6 6.500h10M6 10.500h10" /></svg></div>
        </div>
      </section>

      <!-- Watermark -->
      <svg class="absolute left-[1115px] top-[652px] w-[200px] h-[72px]" viewBox="0 0 200 72">
        <g fill="#c5d4ec" fill-opacity=".58" font-family="Roboto" font-size="51" font-weight="400">
          <text x="4" y="55.500" textLength="63" lengthAdjust="spacingAndGlyphs">ANY</text>
          <text x="133" y="55.500" textLength="64" lengthAdjust="spacingAndGlyphs">RUN</text>
        </g>
        <path fill="none" stroke="#c5d4ec" stroke-opacity=".65" stroke-width="3.200" stroke-linejoin="round" stroke-linecap="round" d="M85 57V12l-7 0q-2 0-2 4v46q0 4 4 2l33-20M85 57l35-21M90 48V9q3-6 7-2l28 21q4 4 0 6M94 24l31 18q3-3 1-7L94 15M91 56l30-18q8 2 5 6L98 65q-6 3-7-2l34-22" />
      </svg>

      <!-- Context menu -->
      <nav class="absolute left-[573px] top-[265px] w-[372px] h-[463px] bg-[#eeeeee] border border-[#a0a0a0] pt-1 px-0.5 leading-[22px] tracking-[-0.36px]">
        <div class="h-[22px] pl-8 font-bold">Open</div>
        <div class="h-[22px] pl-8">Print</div>
        <div class="h-[22px] pl-8">Edit</div>
        <div class="h-[22px] pl-[7px] flex items-center gap-[9px] tracking-[-0.2px]"><svg class="size-4"><use href="#npp" /></svg>Edit with Notepad++</div>
        <div class="h-[22px] pl-[7px] flex items-center gap-[9px]"><svg class="size-4"><use href="#share" /></svg>Share</div>
        <div class="h-[22px] pl-8 pr-[7px] flex items-center justify-between">Open with<svg class="w-2.5 h-3.5"><use href="#chev" /></svg></div>
        <hr class="my-[3px] ml-2 mr-2 border-[#919191]" />
        <div class="h-[22px] pl-8 pr-[7px] flex items-center justify-between">Give access to<svg class="w-2.5 h-3.5"><use href="#chev" /></svg></div>
        <div class="h-[22px] pl-2 flex items-center gap-2"><svg class="size-4"><use href="#rar" /></svg>Add to archive...</div>
        <div class="h-[22px] pl-2 flex items-center gap-2"><svg class="size-4"><use href="#rar" /></svg>Add to "New Text Document.rar"</div>
        <div class="h-[22px] pl-2 flex items-center gap-2"><svg class="size-4"><use href="#rar" /></svg>Compress and email...</div>
        <div class="h-[22px] pl-2 flex items-center gap-2"><svg class="size-4"><use href="#rar" /></svg>Compress to "New Text Document.rar" and email</div>
        <div class="h-[22px] pl-8 tracking-[-0.44px]">Restore previous versions</div>
        <hr class="my-[3px] ml-2 mr-2 border-[#919191]" />
        <div class="h-[22px] pl-8 pr-[7px] flex items-center justify-between">Send to<svg class="w-2.5 h-3.5"><use href="#chev" /></svg></div>
        <hr class="my-[3px] ml-2 mr-2 border-[#919191]" />
        <div class="h-[22px] pl-8">Cut</div>
        <div class="h-[22px] pl-8">Copy</div>
        <hr class="my-[3px] ml-2 mr-2 border-[#919191]" />
        <div class="h-[22px] pl-8">Create shortcut</div>
        <div class="h-[22px] pl-8">Delete</div>
        <div class="h-[22px] pl-8 bg-white">Rename</div>
        <hr class="my-[3px] ml-2 mr-2 border-[#919191]" />
        <div class="h-[22px] pl-8 tracking-[-0.44px]">Properties</div>
      </nav>
    </main>

    <!-- Taskbar -->
    <footer class="h-10 flex items-center text-white bg-linear-to-r from-[#001824] via-[#021420] to-[#020a1e]">
      <div class="w-12 flex justify-center"><svg class="size-[17px]" viewBox="0 0 17 17"><path fill="#fff" d="M0 2.500l7.500-1V8H0zM8.500 1.300L17 0v8H8.500zM0 9h7.500v6.500L0 14.500zM8.500 9H17v8l-8.500-1.300z" /></svg></div>
      <div class="w-72 h-10 bg-[#f1f1f1] border border-[#8d9599] flex items-center text-[#3b3b3b]">
        <svg class="size-[18px] ml-[10px]" viewBox="0 0 18 18"><circle cx="10.500" cy="7" r="5.500" fill="none" stroke="#222" stroke-width="1.200" /><path stroke="#222" stroke-width="1.200" d="M6.500 11L1 16.500" /></svg>
        <span class="ml-[11px] text-[14.5px] tracking-[-0.3px]">Type here to search</span>
        <svg class="w-[72px] h-9 ml-auto mr-[3px]" viewBox="0 0 72 36"><path fill="#f3b873" d="M2 18q1-12 14-15 11-2 14 3-2 9-10 11-2 9-9 12Q2 29 2 18z" /><path fill="#fbd49b" d="M12 6q8-4 15 0-3 6-9 7-6 0-6-7z" /><path fill="none" stroke="#d9486a" stroke-width="2.600" d="M11 7q-2 9 5 14M17 12l-4 12M10 27l22 6M21 19l8 11M24 34l8-6" /><path fill="#5b4a7e" d="M42 4q12-5 25 0l-4 22H46z" /><ellipse cx="54.500" cy="25" rx="16" ry="6" fill="#665490" /><path fill="#382b58" d="M46 20q9 4 17 0v5q-9 3-17 0z" /><ellipse cx="54.500" cy="4.500" rx="12" ry="2.500" fill="#8877ae" /></svg>
      </div>
      <div class="w-[50px] flex justify-center"><svg class="w-[18px] h-4" viewBox="0 0 18 16"><path fill="none" stroke="#fff" stroke-width="1.200" d="M1.500 0v2.500h10V0M1.500 5h10v6h-10zM1.500 16v-2.500h10V16M15.500 0v16M14 6h3" /></svg></div>
      <div class="w-[50px] flex justify-center"><svg class="size-6"><use href="#edge-sm" /></svg></div>
      <div class="w-12 h-10 flex justify-center items-center bg-[#33454f] border-b-2 border-[#76b9ed]"><svg class="size-6"><use href="#explorer" /></svg></div>
      <div class="w-[50px] flex justify-center"><svg class="size-6"><use href="#firefox" /></svg></div>
      <div class="w-12 h-10 flex justify-center"><div class="w-10 border-b-2 border-[#76b9ed] flex justify-center items-center"><svg class="size-6"><use href="#chrome" /></svg></div></div>

      <div class="ml-auto mr-6 flex items-center">
        <svg class="w-[88px] h-[18px] mr-px" viewBox="0 0 88 18"><g fill="none" stroke="#fff" stroke-width="1.200"><path d="M1 12l5.500-5.500L12 12" /><path d="M27 6h7v7h-7zM34 8.500l3-1.500v5l-3-1.500M27 3.500q3.500-3 8 0M27 15.500q3.500 3 8 0" /><path d="M48 7h2.500L54 3.500v11L50.500 11H48zM56 7q1.500 2.500 0 4.500M58.500 5q3 4 0 8M61 3.500q4 5.500 0 11" /><path d="M74 5.500h12v8H74M80 13.500v3M76.500 16.500h7M71.500 3.500h4v4h-4zM73.500 7.500v6" /></g></svg>
        <div class="w-[66px] text-center leading-[18px] tracking-[-0.5px]">1:14 AM<br />1/14/2026</div>
        <svg class="w-[17px] h-4 ml-[10px]" viewBox="0 0 17 16"><path fill="none" stroke="#fff" stroke-width="1.200" d="M1 1h15v11h-5l-2.500 3L6 12H1z" /></svg>
      </div>
    </footer>
    <i class="absolute left-[1355px] bottom-0 w-px h-10 bg-[#5a6472]"></i>
  </body>
</html>
